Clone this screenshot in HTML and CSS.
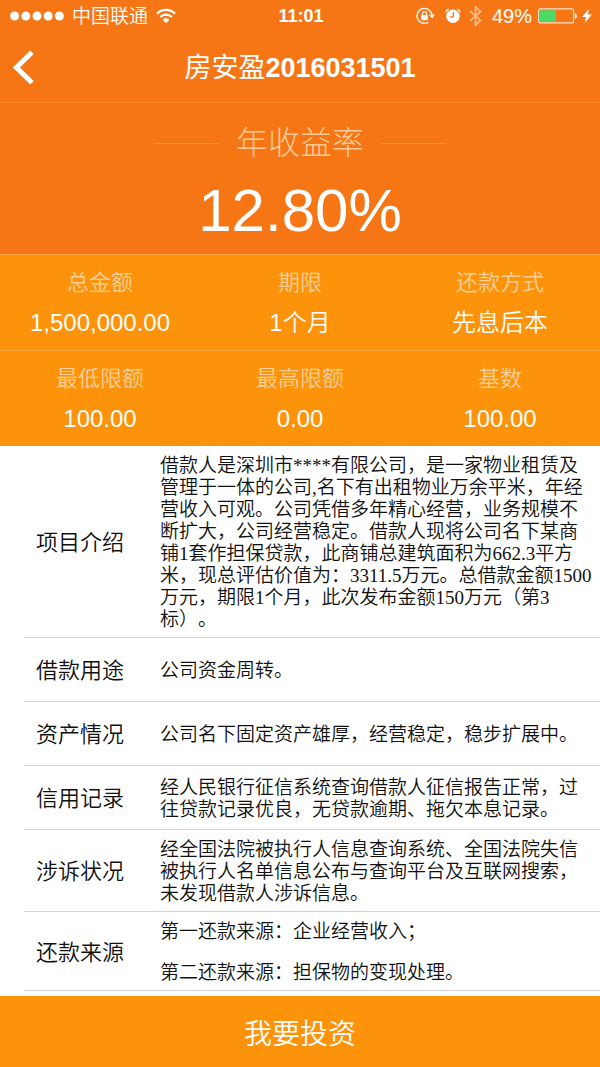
FILE: index.html
```html
<!DOCTYPE html>
<html lang="zh-CN">
<head>
<meta charset="utf-8">
<meta name="viewport" content="width=device-width, initial-scale=1">
<title>房安盈2016031501</title>
<link rel="stylesheet" href="styles.css">
</head>
<body>
<header class="top">
  <div class="status">
    <div class="status-side">
      <svg width="54" height="10" viewBox="0 0 54 10" fill="currentColor" aria-hidden="true"><circle cx="4.6" cy="5" r="4.5"/><circle cx="15.8" cy="5" r="4.5"/><circle cx="27" cy="5" r="4.5"/><circle cx="38.2" cy="5" r="4.5"/><circle cx="49.4" cy="5" r="4.5"/></svg>
      <span class="carrier">中国联通</span>
      <svg width="20" height="16" viewBox="0 0 20 16" aria-hidden="true"><g fill="none" stroke="currentColor" stroke-width="2.2"><path d="M1 5.7a12.7 12.7 0 0 1 18 0"/><path d="M4.2 9a8.2 8.2 0 0 1 11.6 0"/></g><path d="M10 15.2 6.7 11.7a4.7 4.7 0 0 1 6.6 0z" fill="currentColor"/></svg>
    </div>
    <time class="clock">11:01</time>
    <div class="status-side status-right">
      <svg width="19" height="18" viewBox="0 0 19 18" aria-hidden="true"><path d="M16 9A7.5 7.5 0 1 0 12.5 15.2" fill="none" stroke="currentColor" stroke-width="1.3"/><path d="M13 7.8h6l-3 3.7z" fill="currentColor"/><path d="M5.2 8.2h6.6v5H5.2z" fill="currentColor"/><path d="M6.5 8.2V6.6a2 2 0 0 1 4 0v1.6" fill="none" stroke="currentColor" stroke-width="1.2"/></svg>
      <svg class="alarm" width="16" height="16" viewBox="0 0 16 16" aria-hidden="true"><circle cx="8" cy="8.3" r="6.7" fill="currentColor"/><path d="M.8 4.2A5 5 0 0 1 3.8 1.1M12.2 1.1a5 5 0 0 1 3 3.1" fill="none" stroke="currentColor" stroke-width="1.3"/><path d="M8.3 4.3v4.5H4.8" fill="none" stroke="#f67615" stroke-width="1.3"/></svg>
      <svg class="bluetooth" width="13" height="22" viewBox="0 0 13 22" fill="none" stroke="currentColor" stroke-width="1.7" aria-hidden="true"><path d="M1 6.2 11.7 15.4 6.5 20V2l5.2 4.6L1 15.8"/></svg>
      <span class="percent">49%</span>
      <svg width="40" height="16" viewBox="0 0 40 16" aria-hidden="true"><rect x=".6" y=".9" width="35" height="14" rx="2" fill="none" stroke="currentColor" stroke-opacity=".8" stroke-width="1.1"/><rect x="2" y="2.3" width="16" height="11.4" fill="#4cd964"/><path d="M36.9 5.2c2.6.8 2.6 4.8 0 5.6z" fill="currentColor"/></svg>
      <svg class="bolt" width="10" height="14" viewBox="0 0 10 14" aria-hidden="true"><path d="M7 0 0 8h4L2.7 14 10 5.6H5.8z" fill="currentColor"/></svg>
    </div>
  </div>
  <nav class="nav">
    <button class="back" type="button" aria-label="返回">
      <svg width="22" height="36" viewBox="0 0 22 36" aria-hidden="true"><path d="M20 3.2 4.4 18.5 20 33.8" fill="none" stroke="currentColor" stroke-width="5"/></svg>
    </button>
    <h1 class="title">房安盈<b>2016031501</b></h1>
  </nav>
</header>

<main class="page">
  <section class="rate">
    <h2 class="rate-label">年收益率</h2>
    <p class="rate-value">12.80%</p>
  </section>

  <dl class="stats">
    <div class="stat"><dt>总金额</dt><dd>1,500,000.00</dd></div>
    <div class="stat"><dt>期限</dt><dd>1个月</dd></div>
    <div class="stat"><dt>还款方式</dt><dd>先息后本</dd></div>
    <div class="stat"><dt>最低限额</dt><dd>100.00</dd></div>
    <div class="stat"><dt>最高限额</dt><dd>0.00</dd></div>
    <div class="stat"><dt>基数</dt><dd>100.00</dd></div>
  </dl>

  <dl class="details">
    <div class="row"><dt>项目介绍</dt><dd><p>借款人是深圳市****有限公司，是一家物业租赁及管理于一体的公司,名下有出租物业万余平米，年经营收入可观。公司凭借多年精心经营，业务规模不断扩大，公司经营稳定。借款人现将公司名下某商铺1套作担保贷款，此商铺总建筑面积为662.3平方米，现总评估价值为：3311.5万元。总借款金额1500万元，期限1个月，此次发布金额150万元（第3标）。</p></dd></div>
    <div class="row"><dt>借款用途</dt><dd><p>公司资金周转。</p></dd></div>
    <div class="row"><dt>资产情况</dt><dd><p>公司名下固定资产雄厚，经营稳定，稳步扩展中。</p></dd></div>
    <div class="row"><dt>信用记录</dt><dd><p>经人民银行征信系统查询借款人征信报告正常，过往贷款记录优良，无贷款逾期、拖欠本息记录。</p></dd></div>
    <div class="row"><dt>涉诉状况</dt><dd><p>经全国法院被执行人信息查询系统、全国法院失信被执行人名单信息公布与查询平台及互联网搜索，未发现借款人涉诉信息。</p></dd></div>
    <div class="row"><dt>还款来源</dt><dd><p>第一还款来源：企业经营收入；</p><p>第二还款来源：担保物的变现处理。</p></dd></div>
  </dl>
</main>

<button class="invest" type="button">我要投资</button>
</body>
</html>
```

FILE: styles.css
```css
* {
  box-sizing: border-box;
  margin: 0;
  padding: 0;
}

body {
  display: flex;
  flex-direction: column;
  min-height: 100vh;
  background: #fff;
  color: #111;
  font-family: "Liberation Sans", "Noto Sans CJK SC", sans-serif;
  font-weight: 350;
  text-spacing-trim: space-all;
}

svg {
  display: block;
  flex: none;
}

button {
  border: 0;
  color: #fff;
  font: inherit;
}

/* Status bar and title */
.top {
  background: #f67615;
  border-bottom: 1px solid #f88434;
  color: #fff;
}

.status {
  display: grid;
  grid-template-columns: 1fr auto 1fr;
  align-items: center;
  height: 32px;
  padding: 0 8px 0 10px;
}

.status-side {
  display: flex;
  align-items: center;
  gap: 8px;
}

.status-right {
  justify-content: flex-end;
  gap: 6px;
}

.carrier {
  padding-top: 2px;
  font-size: 19px;
  line-height: 24px;
}

.clock {
  font-size: 18px;
  font-weight: 700;
}

.alarm {
  margin: 0 2px 0 4px;
}

.bluetooth {
  margin-right: 4px;
  opacity: 0.5;
}

.percent {
  font-size: 20px;
}

.bolt {
  margin-left: -2px;
}

.nav {
  display: grid;
  grid-template-columns: 60px 1fr 60px;
  align-items: center;
  height: 70px;
}

.back {
  display: flex;
  align-items: center;
  height: 100%;
  padding-left: 12px;
  background: none;
}

.title {
  padding-top: 2px;
  text-align: center;
  font-size: 27px;
  font-weight: 400;
  line-height: 36px;
}

/* Yield */
.rate {
  padding: 18px 0 5px;
  background: #f67615;
  color: #fff;
  text-align: center;
}

.rate-label {
  display: flex;
  align-items: center;
  justify-content: center;
  gap: 16px;
  color: #fdcb98;
  font-size: 32px;
  font-weight: 300;
  line-height: 44px;
}

.rate-label::before,
.rate-label::after {
  content: "";
  width: 66px;
  height: 1px;
  background: #fd920b;
}

.rate-value {
  padding-top: 8px;
  font-size: 60px;
  line-height: 76px;
}

/* Key figures */
.stats {
  display: grid;
  grid-template-columns: repeat(3, 1fr);
  background: #fd920b;
  color: #fff;
  text-align: center;
}

.stat {
  height: 96px;
  padding-top: 12px;
  border-top: 1px solid #fda643;
}

.stat dt {
  color: #fed09a;
  font-size: 22px;
  line-height: 32px;
}

.stat dd {
  padding-top: 4px;
  font-size: 24px;
  line-height: 40px;
}

/* Project details */
.page {
  flex: 1;
}

.details {
  padding-left: 24px;
}

.row {
  display: grid;
  grid-template-columns: 112px 1fr;
  column-gap: 24px;
  align-items: center;
  min-height: 64px;
  padding: 9px 4px 6px 0;
  border-bottom: 1px solid #d2d2d4;
}

.row dt {
  padding-left: 12px;
  font-size: 22px;
  line-height: 32px;
}

.row dd {
  font-family: "Liberation Serif", "Noto Sans CJK SC", serif;
  font-size: 19px;
  line-height: 22px;
}

.row p + p {
  margin-top: 19px;
}

.invest {
  height: 71px;
  background: #fd920b;
  font-size: 28px;
  cursor: pointer;
}
```
